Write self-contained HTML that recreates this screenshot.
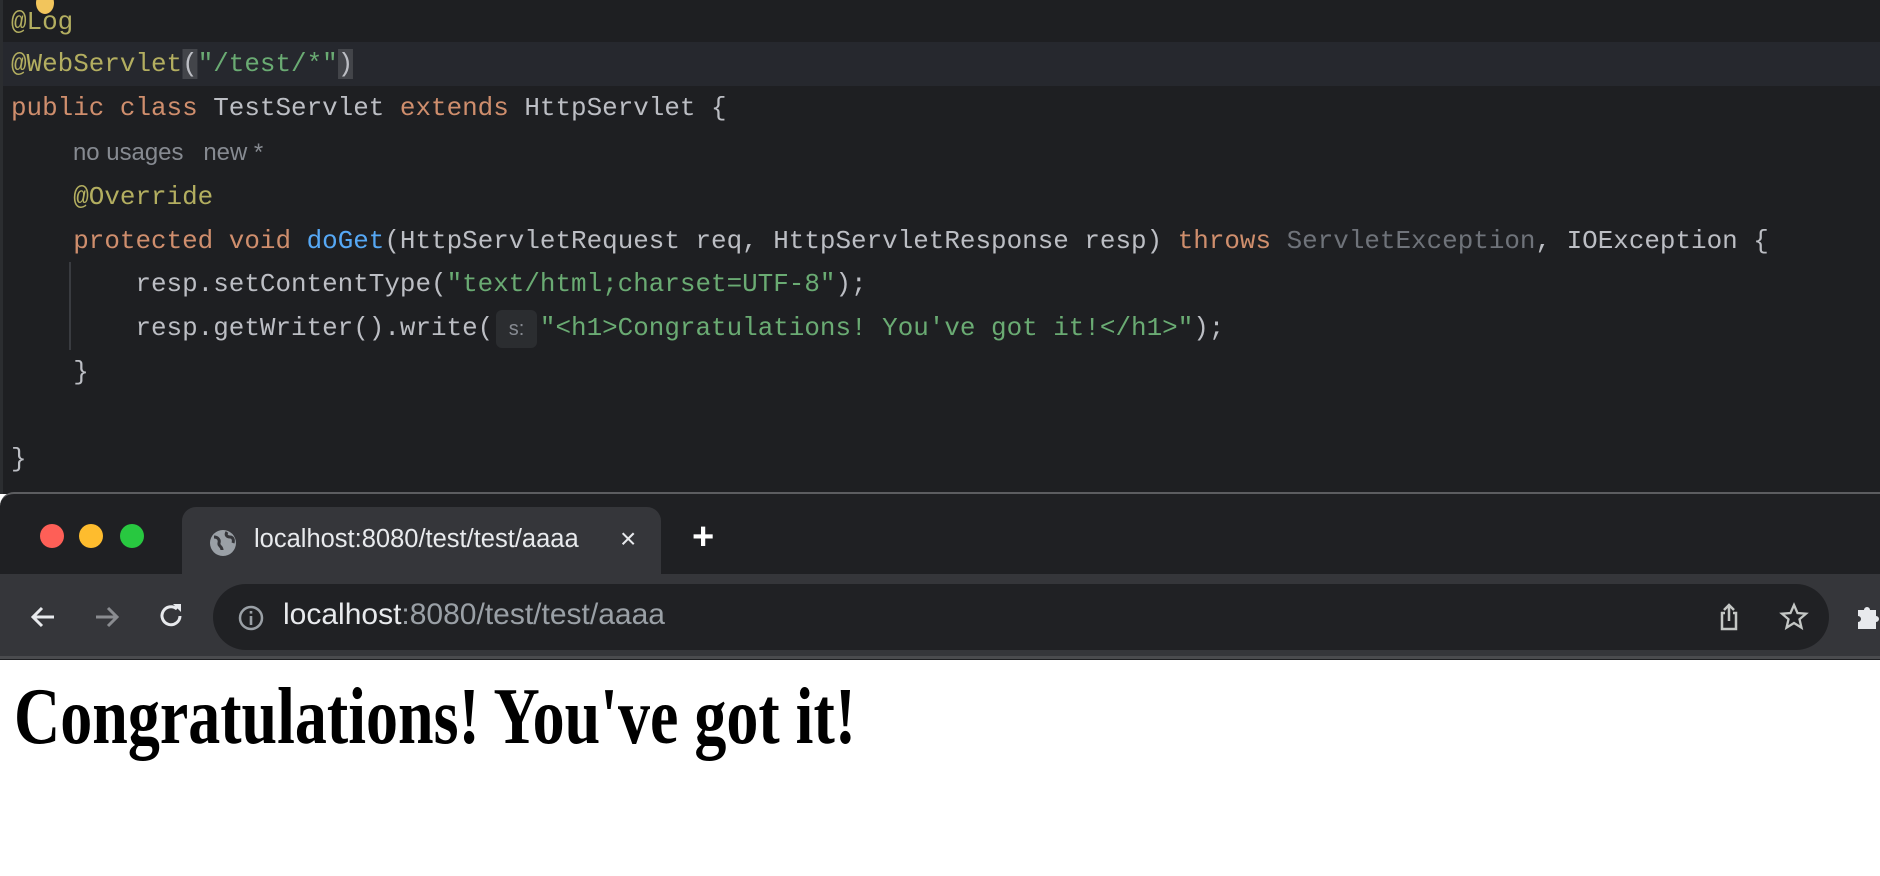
<!DOCTYPE html>
<html><head><meta charset="utf-8"><style>
*{margin:0;padding:0;box-sizing:border-box}
body{width:1880px;height:876px;overflow:hidden;background:#fff;position:relative;font-family:"Liberation Sans",sans-serif}
#ed{position:absolute;left:0;top:0;width:1880px;height:494px;background:#1e1f22;border-left:3px solid #2b2d30}
.l{position:absolute;left:8px;height:44px;line-height:44px;font-family:"Liberation Mono",monospace;font-size:26px;color:#bcbec4;white-space:pre;transform:scaleX(0.997);transform-origin:left}
.k{color:#cf8e6d}.a{color:#b3ae60}.s{color:#6aab73}.f{color:#56a8f5}.g{color:#6f737a}
.hint{font-family:"Liberation Sans",sans-serif;font-size:24px;color:#868a91}
.hl{background:#43454a}
#br{position:absolute;left:0;top:492px;width:1880px;height:168px;background:#1f2023;border-top:2px solid #5c5d60;border-top-left-radius:14px}
.dot{position:absolute;width:24px;height:24px;border-radius:50%;top:30px}
#tab{position:absolute;left:182px;top:13px;width:479px;height:70px;background:#35363a;border-radius:14px 14px 0 0}
#tb{position:absolute;left:0;top:80px;width:1880px;height:85px;background:#35363a;border-bottom:3px solid #4a4b4e}
#omni{position:absolute;left:213px;top:10px;width:1616px;height:66px;background:#202124;border-radius:33px}
h1{position:absolute;left:14px;top:677px;font-family:"Liberation Serif",serif;font-weight:bold;font-size:80px;line-height:80px;white-space:nowrap;transform:scaleX(0.80);transform-origin:left}
</style></head><body>
<div id="ed">
 <div style="position:absolute;left:0;top:42px;width:1880px;height:44px;background:#26282e"></div>
 <div style="position:absolute;left:33px;top:-8px;width:18px;height:22px;border-radius:50%;background:#f2c55c"></div>
 <div style="position:absolute;left:66px;top:262px;width:2px;height:88px;background:#393b40"></div>
 <div class="l a" style="top:0">@Log</div>
 <div class="l" style="top:42px"><span class="a">@WebServlet</span><span class="hl">(</span><span class="s">"/test/*"</span><span class="hl">)</span></div>
 <div class="l" style="top:86px"><span class="k">public class </span>TestServlet <span class="k">extends </span>HttpServlet {</div>
 <div class="l hint" style="top:131px;left:70px">no usages &nbsp; new *</div>
 <div class="l a" style="top:175px">    @Override</div>
 <div class="l" style="top:219px">    <span class="k">protected void </span><span class="f">doGet</span>(HttpServletRequest req, HttpServletResponse resp) <span class="k">throws </span><span class="g">ServletException</span>, IOException {</div>
 <div class="l" style="top:262px">        resp.setContentType(<span class="s">"text/html;charset=UTF-8"</span>);</div>
 <div style="position:absolute;left:493px;top:310px;width:41px;height:38px;background:#2b2d30;border-radius:6px;color:#868a91;font-size:20px;line-height:38px;text-align:center">s:</div>
 <div class="l" style="top:306px">        resp.getWriter().write(   <span class="s">"&lt;h1&gt;Congratulations! You've got it!&lt;/h1&gt;"</span>);</div>
 <div class="l" style="top:350px">    }</div>
 <div class="l" style="top:437px">}</div>
</div>
<div id="br">
 <div class="dot" style="left:40px;background:#fe5f57"></div>
 <div class="dot" style="left:79px;background:#febc2e"></div>
 <div class="dot" style="left:120px;background:#28c840"></div>
 <div id="tab">
  <svg style="position:absolute;left:27px;top:22px" width="28" height="28" viewBox="0 0 28 28"><circle cx="14" cy="14" r="13" fill="#9aa0a6"/><path d="M5 8c4 0 6 3 5 6s3 3 3 7M18 3c-2 3 0 5 3 5s4 3 3 6" stroke="#35363a" stroke-width="3" fill="none"/></svg>
  <div style="position:absolute;left:72px;top:18px;color:#e8eaed;font-size:25.5px">localhost:8080/test/test/aaaa</div>
  <div style="position:absolute;left:438px;top:16px;color:#e8eaed;font-size:28px">×</div>
 </div>
 <div style="position:absolute;left:692px;top:22px;color:#fff;font-size:38px;font-weight:bold">+</div>
 <div id="tb">
  <svg style="position:absolute;left:28px;top:28px" width="30" height="30" viewBox="0 0 30 30"><path d="M26 15H5M14 6l-9 9 9 9" stroke="#e8eaed" stroke-width="3" fill="none"/></svg>
  <svg style="position:absolute;left:92px;top:28px" width="30" height="30" viewBox="0 0 30 30"><path d="M4 15h21M16 6l9 9-9 9" stroke="#8a8c90" stroke-width="3" fill="none"/></svg>
  <svg style="position:absolute;left:156px;top:27px" width="30" height="30" viewBox="0 0 30 30"><path d="M24 15a9 9 0 1 1-3-7" stroke="#e8eaed" stroke-width="3" fill="none"/><path d="M17 3h8v8z" fill="#e8eaed"/></svg>
  <div id="omni">
   <svg style="position:absolute;left:24px;top:20px" width="28" height="28" viewBox="0 0 28 28"><circle cx="14" cy="14" r="11" stroke="#9aa0a6" stroke-width="2.5" fill="none"/><rect x="12.7" y="12" width="2.6" height="9" fill="#9aa0a6"/><rect x="12.7" y="7" width="2.6" height="2.6" fill="#9aa0a6"/></svg>
   <div style="position:absolute;left:70px;top:14px;font-size:30px;color:#e8eaed">localhost<span style="color:#9aa0a6">:8080/test/test/aaaa</span></div>
   <svg style="position:absolute;left:1503px;top:18px" width="26" height="30" viewBox="0 0 26 30"><path d="M9 11H6v16h14V11h-3M13 19V3M8 8l5-5 5 5" stroke="#c4c7c5" stroke-width="2.5" fill="none"/></svg>
   <svg style="position:absolute;left:1566px;top:18px" width="30" height="30" viewBox="0 0 30 30"><path d="M15 3l3.5 8 8.5.7-6.5 5.6 2 8.4L15 21l-7.5 4.7 2-8.4L3 11.7l8.5-.7z" stroke="#c4c7c5" stroke-width="2.3" fill="none"/></svg>
  </div>
  <svg style="position:absolute;left:1856px;top:28px" width="26" height="30" viewBox="0 0 26 30"><path d="M2 8h6a3 3 0 1 1 6 0h6v6a3 3 0 1 1 0 6v7H2v-7a3 3 0 1 0 0-6z" fill="#e8eaed"/></svg>
 </div>
</div>
<h1>Congratulations! You've got it!</h1>
</body></html>
